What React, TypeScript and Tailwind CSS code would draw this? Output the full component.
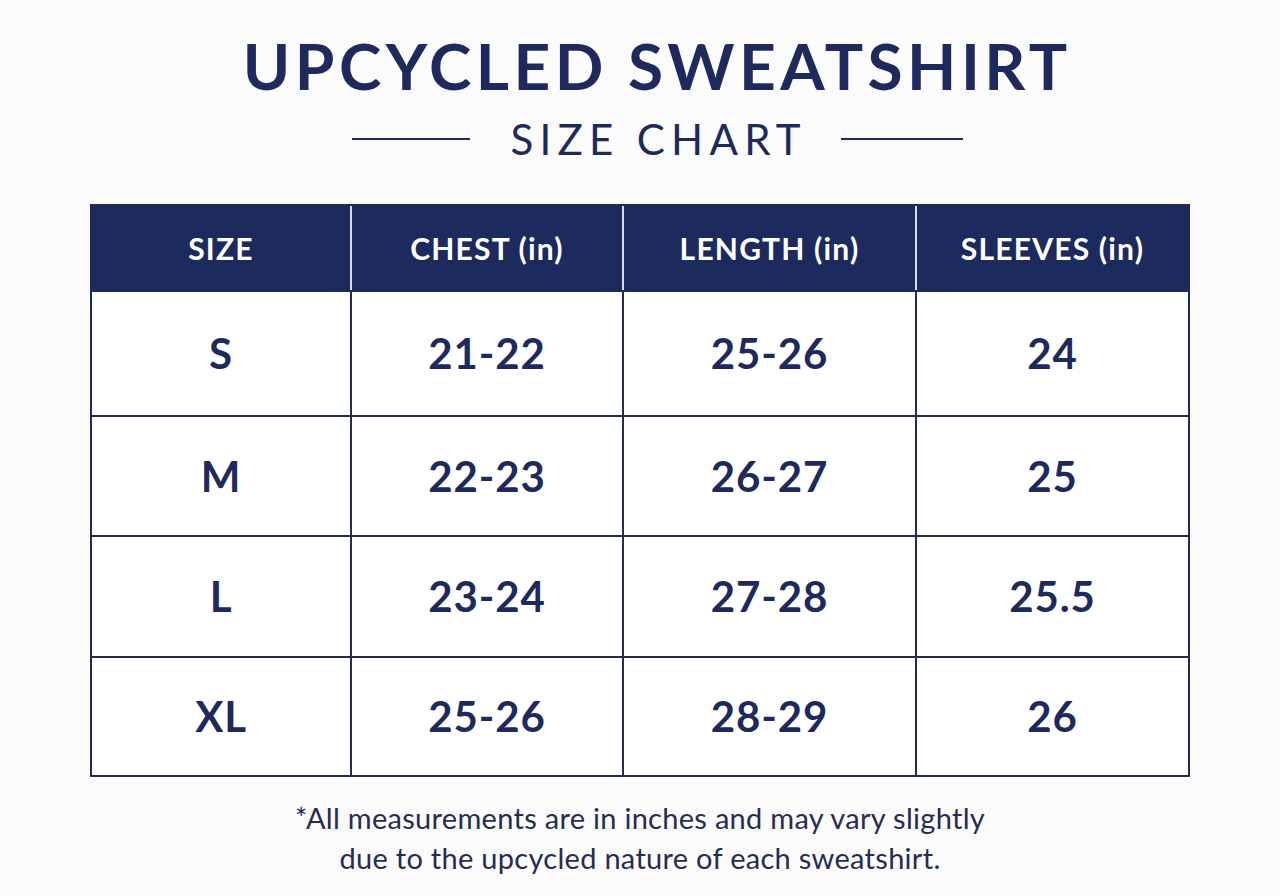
import React from "react"

const headers = ["SIZE", "CHEST (in)", "LENGTH (in)", "SLEEVES (in)"]

const rows = [
  { cells: ["S", "21-22", "25-26", "24"], h: "h-[125px]" },
  { cells: ["M", "22-23", "26-27", "25"], h: "h-[120px]" },
  { cells: ["L", "23-24", "27-28", "25.5"], h: "h-[121px]" },
  { cells: ["XL", "25-26", "28-29", "26"], h: "h-[117px]" },
]

export default function App() {
  return (
    <div
      className="w-[1280px] h-[896px] bg-[#fbfbfb] text-[#1e2a5c] overflow-hidden"
      style={{ fontFamily: "Lato, 'Open Sans', sans-serif" }}
    >
      {/* Title */}
      <div className="pt-[34px] flex flex-col items-center">
        <h1 className="text-[64px] leading-none font-bold tracking-[0.07em] pl-[0.07em] ml-[30px]">
          UPCYCLED SWEATSHIRT
        </h1>
        <div className="mt-[20px] flex items-center gap-[34px] ml-[35px]">
          <div className="w-[118px] h-[2px] bg-[#1e2a5c]" />
          <h2 className="text-[42px] leading-none font-normal tracking-[0.15em] pl-[0.15em]">
            SIZE CHART
          </h2>
          <div className="w-[122px] h-[2px] bg-[#1e2a5c]" />
        </div>
      </div>

      {/* Table */}
      <div className="mt-[44px] mx-auto w-[1100px] border-2 border-[#242b52]">
        <div className="grid grid-cols-[260px_272px_293px_1fr] h-[86px] bg-[#1c2a5e] border-b-2 border-[#242b52]">
          {headers.map((h, i) => (
            <div
              key={h}
              className={
                "flex items-center justify-center text-white text-[30px] font-bold tracking-[0.04em] " +
                (i < headers.length - 1 ? "border-r-2 border-[#d9dce6]" : "")
              }
            >
              {h}
            </div>
          ))}
        </div>
        {rows.map((row, r) => (
          <div
            key={r}
            className={
              "grid grid-cols-[260px_272px_293px_1fr] bg-white " +
              row.h +
              (r < rows.length - 1 ? " border-b-2 border-[#242b52]" : "")
            }
          >
            {row.cells.map((c, i) => (
              <div
                key={i}
                className={
                  "flex items-center justify-center text-[42px] font-bold tracking-[0.02em] " +
                  (i < row.cells.length - 1 ? "border-r-2 border-[#242b52]" : "")
                }
              >
                {c}
              </div>
            ))}
          </div>
        ))}
      </div>

      {/* Footnote */}
      <p className="mt-[21px] text-center text-[29px] leading-[40px] tracking-[0.01em] text-[#262c52]">
        *All measurements are in inches and may vary slightly
        <br />
        due to the upcycled nature of each sweatshirt.
      </p>
    </div>
  )
}
